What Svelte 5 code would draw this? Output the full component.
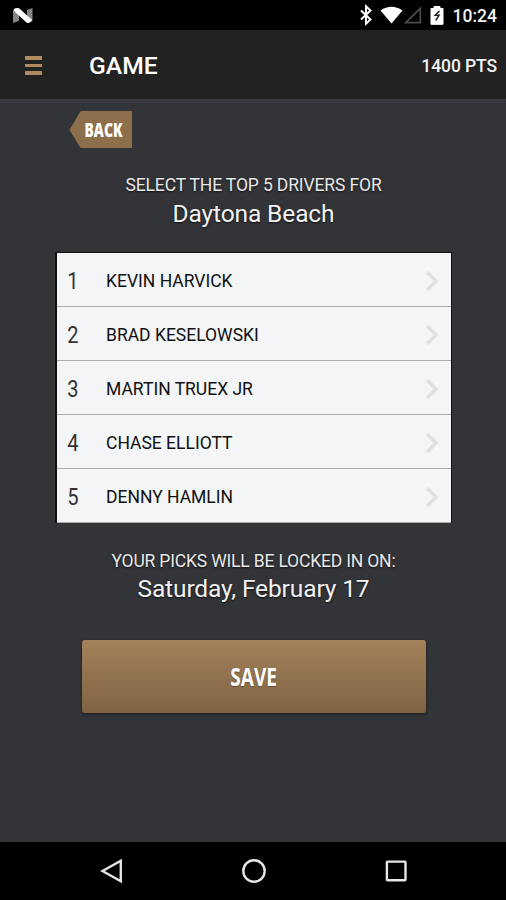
<script>
	export let points = 1400;
	export let race = "Daytona Beach";
	export let lockDate = "Saturday, February 17";
	export let drivers = [
		"KEVIN HARVICK",
		"BRAD KESELOWSKI",
		"MARTIN TRUEX JR",
		"CHASE ELLIOTT",
		"DENNY HAMLIN",
	];
</script>

<div class="screen">
	<div class="status">
		<svg class="status__logo" width="20" height="16" viewBox="0 0 20 16">
			<path d="M0 2L6 0V13L0 15ZM14 2L19.5 0V13L14 15Z" fill="#858585" />
			<path d="M1 1Q4-1 7 1L19 12Q18 15 14 15L1 3Z" fill="#fff" />
		</svg>
		<svg class="status__icons" width="90" height="22" viewBox="0 0 90 22">
			<path
				d="M2 6.5L11.5 15.5L7 19.7V2.3L11.5 6.5L2 15.5"
				fill="none"
				stroke="#fff"
				stroke-width="2"
			/>
			<path d="M21.5 6.5Q32.5-1 43.5 6.5L32.5 19.5Z" fill="#fff" />
			<path
				d="M61.3 4.3V18.7H46.7Z"
				fill="none"
				stroke="#4b4b4b"
				stroke-width="1.7"
			/>
			<path
				d="M75 2.5H81V4.5H84V20.3H72V4.5H75Z"
				fill="#fff"
				stroke="#fff"
				stroke-width="1"
				stroke-linejoin="round"
			/>
			<path
				d="M80.5 7L76.2 11.3H80L76.7 16.5"
				fill="none"
				stroke="#222"
				stroke-width="1.5"
			/>
		</svg>
		<span class="status__time">10:24</span>
	</div>

	<header>
		<button class="menu" aria-label="Menu">
			<span></span>
			<span></span>
			<span></span>
		</button>
		<h1>GAME</h1>
		<div class="points">{points} PTS</div>
	</header>

	<main>
		<button class="back">
			<svg width="63" height="38" viewBox="0 0 63 38">
				<path
					d="M0.5 19L11 1Q11.5 0 12.5 0H62Q63 0 63 1V36Q63 37 62 37H12.5Q11.5 37 11 36Z"
					fill="#8e6f4b"
				/>
			</svg>
			<span class="condensed">BACK</span>
		</button>

		<p class="caption caption--top">SELECT THE TOP 5 DRIVERS FOR</p>
		<p class="value value--race">{race}</p>

		<ol>
			{#each drivers as driver, i (i)}
				<li>
					<span class="rank">{i + 1}</span>
					<span class="driver">{driver}</span>
					<svg width="16" height="22" viewBox="0 0 16 22">
						<path
							d="M3 2L12 11L3 20"
							fill="none"
							stroke="#dee1e3"
							stroke-width="3.6"
						/>
					</svg>
				</li>
			{/each}
		</ol>

		<p class="caption caption--lock">YOUR PICKS WILL BE LOCKED IN ON:</p>
		<p class="value value--date">{lockDate}</p>

		<button class="save"><span class="condensed">SAVE</span></button>
	</main>

	<nav>
		<svg width="24" height="26" viewBox="0 0 24 26">
			<path d="M2.5 13L20.8 2.8V23.2Z" />
		</svg>
		<svg width="26" height="26" viewBox="0 0 26 26">
			<circle cx="13" cy="13" r="10.7" />
		</svg>
		<svg width="24" height="26" viewBox="0 0 24 26">
			<rect x="2.9" y="3.6" width="18.6" height="18.6" rx="0.6" />
		</svg>
	</nav>
</div>

<style>
	:global(body) {
		background: #000;
	}

	.screen,
	.screen * {
		box-sizing: border-box;
	}

	.screen {
		width: 506px;
		height: 900px;
		display: flex;
		flex-direction: column;
		overflow: hidden;
		background: #333438;
		color: #f2f2f2;
		font-family: Roboto, sans-serif;
	}

	button {
		padding: 0;
		border: 0;
		background: transparent;
		color: inherit;
		cursor: pointer;
	}

	h1,
	p,
	ol {
		margin: 0;
		padding: 0;
	}

	.status {
		height: 30px;
		flex: none;
		display: flex;
		align-items: center;
		padding: 0 9px 0 13px;
		background: #000;
	}

	.status__logo {
		margin-top: 1px;
	}

	.status__icons {
		margin: 0 4px 0 auto;
	}

	.status__time {
		font-size: 17.5px;
		font-weight: 500;
		line-height: 30px;
		padding-top: 2px;
	}

	header {
		height: 69px;
		flex: none;
		display: flex;
		align-items: center;
		padding: 2px 9px 0 25px;
		background: #222;
	}

	.menu {
		width: 17px;
		display: flex;
		flex-direction: column;
		gap: 4px;
	}

	.menu span {
		height: 3.5px;
		background: #b08b62;
	}

	h1 {
		margin-left: 47px;
		color: #fff;
		font-size: 24.7px;
		font-weight: 500;
		line-height: 30px;
	}

	.points {
		margin-left: auto;
		font-size: 17.5px;
		font-weight: 500;
		letter-spacing: -0.1px;
	}

	main {
		flex: 1;
		display: flex;
		flex-direction: column;
		align-items: center;
		padding-left: 1px;
		text-shadow: 0 1px 2px rgba(0, 0, 0, 0.7);
		background: linear-gradient(#3a3b3f, #333438 5px);
	}

	.back {
		position: relative;
		width: 63px;
		height: 38px;
		flex: none;
		align-self: flex-start;
		margin: 12px 0 0 68px;
	}

	.back svg {
		display: block;
	}

	.condensed {
		display: inline-block;
		color: #fff;
		font-family: "Open Sans", sans-serif;
		font-weight: 700;
		white-space: nowrap;
		transform: scaleX(0.76);
	}

	.back .condensed {
		position: absolute;
		top: 0;
		left: 6px;
		width: 57px;
		font-size: 19px;
		font-weight: 800;
		line-height: 38px;
		text-shadow: none;
		transform: scaleX(0.73);
	}

	.caption {
		font-size: 17.5px;
		line-height: 24px;
		letter-spacing: -0.13px;
		color: #e8e8e8;
		white-space: nowrap;
	}

	.value {
		font-size: 24.5px;
		line-height: 32px;
		letter-spacing: -0.12px;
		white-space: nowrap;
	}

	.caption--top {
		margin-top: 24px;
	}

	.value--race {
		margin-top: 1px;
	}

	ol {
		width: 397px;
		margin-top: 22px;
		border: 1px solid #101113;
		border-left-width: 2px;
		border-bottom: 0;
		list-style: none;
		background: #f3f5f7;
		color: #111;
		text-shadow: none;
	}

	li {
		height: 54px;
		display: flex;
		align-items: center;
		padding: 2px 11px 0 9px;
		border-bottom: 1px solid #a9abad;
	}

	.rank {
		width: 40px;
		color: #333;
		font-size: 24.5px;
		transform: scaleX(0.82);
		transform-origin: 7px 50%;
	}

	.driver {
		font-size: 17.5px;
	}

	li svg {
		margin-left: auto;
	}

	.caption--lock {
		margin-top: 26px;
		letter-spacing: -0.18px;
	}

	.save {
		width: 344px;
		height: 73px;
		margin-top: 35px;
		border-radius: 3px;
		background: linear-gradient(#a4825b, #7f6342);
		box-shadow: 0 1px 3px rgba(0, 0, 0, 0.5);
		text-shadow: 0 1px 1px rgba(0, 0, 0, 0.3);
	}

	.save .condensed {
		font-size: 25px;
		line-height: 73px;
	}

	nav {
		height: 58px;
		flex: none;
		display: flex;
		justify-content: space-between;
		align-items: center;
		padding: 0 98px 0 100px;
		background: #000;
	}

	nav svg {
		fill: none;
		stroke: #e6e6e6;
		stroke-width: 2.4;
	}
</style>
